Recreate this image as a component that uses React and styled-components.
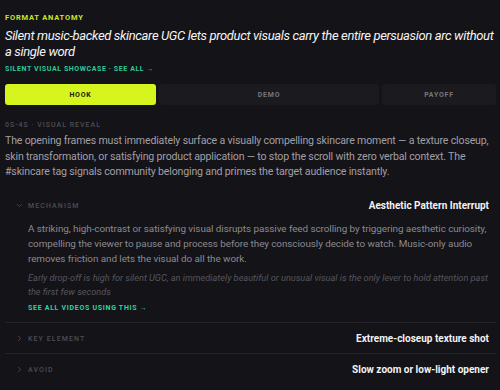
import React from 'react';
import styled, { createGlobalStyle } from 'styled-components';
import { ChevronDown, ChevronRight } from 'lucide-react';

const GlobalStyle = createGlobalStyle`
  html, body {
    margin: 0;
    padding: 0;
    background: #141318;
  }
  * { box-sizing: border-box; }
`;

const Page = styled.div`
  width: 500px;
  height: 390px;
  overflow: hidden;
  padding: 13px 4px 0 5px;
  background: #141318;
  font-family: Roboto, "Liberation Sans", sans-serif;
  color: #a7a6ab;
`;

const Eyebrow = styled.div`
  font-size: 7.5px;
  font-weight: 700;
  letter-spacing: 0.8px;
  text-transform: uppercase;
  color: #c9e52b;
  line-height: 10px;
`;

const SubLink = styled.div`
  margin-top: 4px;
  font-size: 7px;
  font-weight: 700;
  letter-spacing: 0.6px;
  text-transform: uppercase;
  color: #2fc99c;
  line-height: 10px;
`;

const Title = styled.h1`
  margin: 5px -6px 0 0;
  font-style: italic;
  font-weight: 400;
  font-size: 13px;
  letter-spacing: -0.36px;
  line-height: 16px;
  color: #f4f4f5;
`;

const Tabs = styled.div`
  display: grid;
  grid-template-columns: 151px 220px 114px;
  gap: 3px;
  margin-top: 10px;
`;

const Tab = styled.div`
  height: 21px;
  display: flex;
  align-items: center;
  justify-content: center;
  border-radius: 3px;
  font-size: 7px;
  font-weight: 700;
  letter-spacing: 0.8px;
  background: ${props => props.active ? '#d6f51f' : '#1b1a1f'};
  color: ${props => props.active ? '#1a1a12' : '#77767c'};
`;

const Meta = styled.div`
  margin-top: 15px;
  font-size: 7px;
  font-weight: 500;
  letter-spacing: 1px;
  color: #4f4e54;
  line-height: 10px;
`;

const Lead = styled.p`
  margin: 3px 0 0;
  font-size: 10.6px;
  letter-spacing: -0.17px;
  line-height: 15.5px;
  white-space: nowrap;
  color: #a19fa6;
`;

const Section = styled.div`
  border-bottom: ${props => props.last ? 'none' : '1px solid #232228'};
  padding: ${props => props.open ? '20px 7px 10px 10px' : '10px 7px 8px 10px'};
`;

const Head = styled.div`
  display: flex;
  align-items: center;
  height: 12px;
  color: #55545a;
  svg { flex: none; }
`;

const Label = styled.span`
  margin-left: 4px;
  font-size: 7px;
  font-weight: 500;
  letter-spacing: 1.1px;
  text-transform: uppercase;
  color: #4e4d53;
  flex: 1;
`;

const Value = styled.span`
  font-size: 10px;
  font-weight: 700;
  color: #f2f2f3;
`;

const Body = styled.div`
  padding: 9px 0 0 13px;
`;

const Text = styled.p`
  margin: 0;
  font-size: 9.9px;
  letter-spacing: -0.06px;
  line-height: 15px;
  white-space: nowrap;
  color: #8b8a90;
`;

const Note = styled.p`
  margin: 5px 0 0;
  font-size: 9.2px;
  font-style: italic;
  line-height: 14px;
  white-space: nowrap;
  color: #56555b;
`;

const LinkLine = styled.div`
  margin-top: 5px;
  font-size: 7px;
  font-weight: 700;
  letter-spacing: 0.7px;
  color: #2fd39f;
`;

const rows = [
  { label: 'Key element', value: 'Extreme-closeup texture shot' },
  { label: 'Avoid', value: 'Slow zoom or low-light opener' },
];

export default function App() {
  return (
    <Page>
      <GlobalStyle />
      <Eyebrow>Format Anatomy</Eyebrow>
      <Title>Silent music-backed skincare UGC lets product visuals carry the entire persuasion arc without a single word</Title>
      <SubLink>Silent Visual Showcase · See All →</SubLink>
      <Tabs>
        <Tab active>HOOK</Tab>
        <Tab>DEMO</Tab>
        <Tab>PAYOFF</Tab>
      </Tabs>
      <Meta>0S-4S · VISUAL REVEAL</Meta>
      <Lead>
        The opening frames must immediately surface a visually compelling skincare moment — a texture closeup,<br />
        skin transformation, or satisfying product application — to stop the scroll with zero verbal context. The<br />
        #skincare tag signals community belonging and primes the target audience instantly.
      </Lead>
      <Section open>
        <Head>
          <ChevronDown size={9} strokeWidth={2} />
          <Label>Mechanism</Label>
          <Value>Aesthetic Pattern Interrupt</Value>
        </Head>
        <Body>
          <Text>
            A striking, high-contrast or satisfying visual disrupts passive feed scrolling by triggering aesthetic curiosity,<br />
            compelling the viewer to pause and process before they consciously decide to watch. Music-only audio<br />
            removes friction and lets the visual do all the work.
          </Text>
          <Note>
            Early drop-off is high for silent UGC, an immediately beautiful or unusual visual is the only lever to hold attention past<br />
            the first few seconds
          </Note>
          <LinkLine>SEE ALL VIDEOS USING THIS →</LinkLine>
        </Body>
      </Section>
      {rows.map((row, i) => (
        <Section key={row.label} last={i === rows.length - 1}>
          <Head>
            <ChevronRight size={9} strokeWidth={2} />
            <Label>{row.label}</Label>
            <Value>{row.value}</Value>
          </Head>
        </Section>
      ))}
    </Page>
  );
}
